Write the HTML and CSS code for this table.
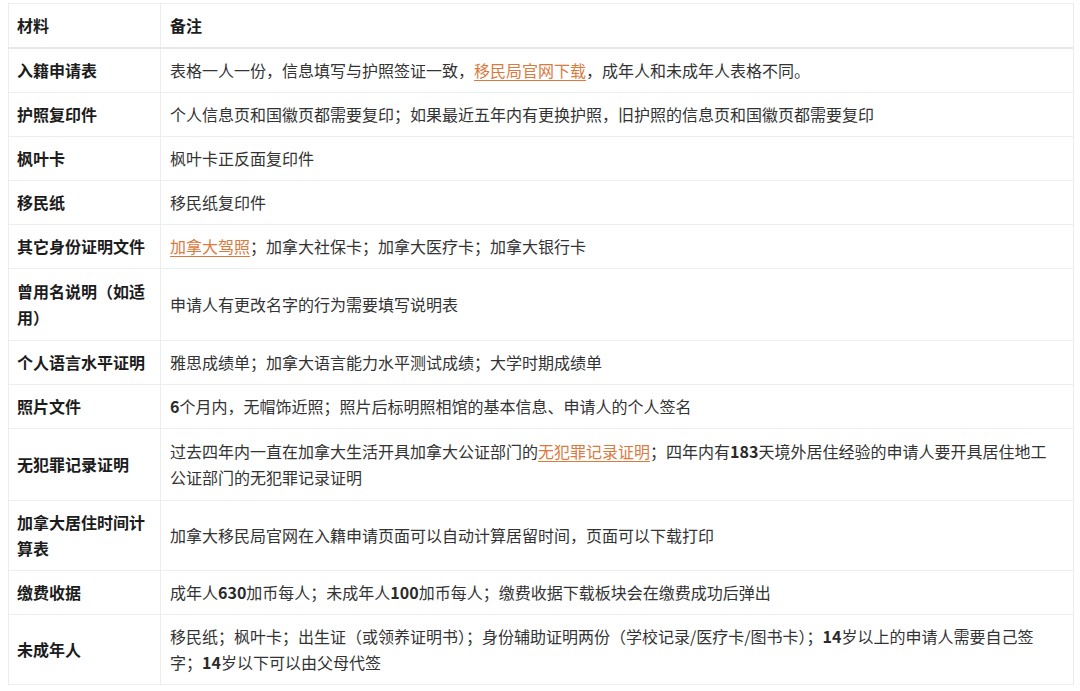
FILE: index.html
```html
<!DOCTYPE html>
<html lang="zh">
<head>
<meta charset="utf-8">
<title>入籍材料</title>
<link rel="stylesheet" href="styles.css">
</head>
<body>
<div class="wrap">
<table class="docs">
  <thead>
    <tr><th class="c1">材料</th><th class="c2">备注</th></tr>
  </thead>
  <tbody>
    <tr><td class="name">入籍申请表</td><td>表格一人一份，信息填写与护照签证一致，<a class="lnk" href="#">移民局官网下载</a>，成年人和未成年人表格不同。</td></tr>
    <tr><td class="name">护照复印件</td><td>个人信息页和国徽页都需要复印；如果最近五年内有更换护照，旧护照的信息页和国徽页都需要复印</td></tr>
    <tr><td class="name">枫叶卡</td><td>枫叶卡正反面复印件</td></tr>
    <tr><td class="name">移民纸</td><td>移民纸复印件</td></tr>
    <tr><td class="name">其它身份证明文件</td><td><a class="lnk" href="#">加拿大驾照</a>；加拿大社保卡；加拿大医疗卡；加拿大银行卡</td></tr>
    <tr class="tall"><td class="name">曾用名说明（如适用）</td><td>申请人有更改名字的行为需要填写说明表</td></tr>
    <tr><td class="name">个人语言水平证明</td><td>雅思成绩单；加拿大语言能力水平测试成绩；大学时期成绩单</td></tr>
    <tr><td class="name">照片文件</td><td><span class="num">6</span>个月内，无帽饰近照；照片后标明照相馆的基本信息、申请人的个人签名</td></tr>
    <tr class="tall"><td class="name">无犯罪记录证明</td><td>过去四年内一直在加拿大生活开具加拿大公证部门的<a class="lnk" href="#">无犯罪记录证明</a>；四年内有<span class="num">183</span>天境外居住经验的申请人要开具居住地工公证部门的无犯罪记录证明</td></tr>
    <tr><td class="name">加拿大居住时间计算表</td><td>加拿大移民局官网在入籍申请页面可以自动计算居留时间，页面可以下载打印</td></tr>
    <tr><td class="name">缴费收据</td><td>成年人<span class="num">630</span>加币每人；未成年人<span class="num">100</span>加币每人；缴费收据下载板块会在缴费成功后弹出</td></tr>
    <tr><td class="name">未成年人</td><td>移民纸；枫叶卡；出生证（或领养证明书）；身份辅助证明两份（学校记录/医疗卡/图书卡）；<span class="num">14</span>岁以上的申请人需要自己签字；<span class="num">14</span>岁以下可以由父母代签</td></tr>
  </tbody>
</table>
</div>
</body>
</html>
```
FILE: styles.css
```css
html, body {
  margin: 0;
  padding: 0;
  background: #ffffff;
}

.wrap {
  padding: 3px 0 0 8px;
}

.docs {
  width: 1066px;
  border-collapse: collapse;
  table-layout: fixed;
  font-family: "Microsoft YaHei", "Noto Sans CJK SC", "Noto Sans", sans-serif;
  font-size: 16px;
  line-height: 26px;
  color: #333333;
}

.docs th,
.docs td {
  border: 1px solid #ededed;
  padding: 8px 8px 9px 8px;
  vertical-align: middle;
  text-align: left;
}

.docs tr.tall td {
  padding-top: 9px;
  padding-bottom: 10px;
}

.docs th {
  font-weight: 700;
  color: #1c1c1c;
  border-bottom: 2px solid #e8e8e8;
}

.c1 {
  width: 135px;
}

.docs td.name {
  font-weight: 700;
  color: #1c1c1c;
}

.docs td:last-child,
.docs th.c2 {
  padding-left: 9px;
  padding-right: 18px;
}

.num {
  font-weight: 600;
  color: #2a2a2a;
}

.lnk {
  color: #dc7a3e;
  text-decoration: underline;
  text-underline-offset: 3px;
}
```
